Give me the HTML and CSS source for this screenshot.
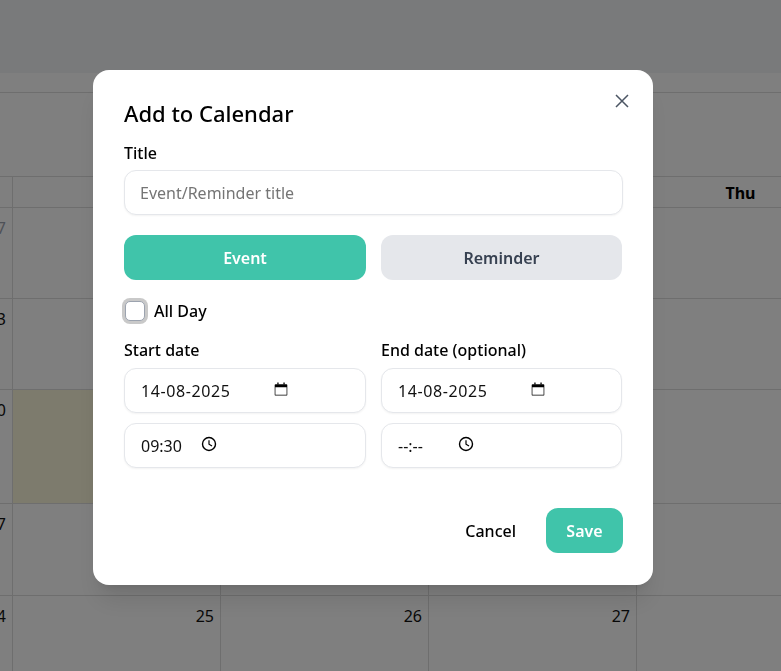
FILE: index.html
```html
<!DOCTYPE html>
<html lang="en">
<head>
  <meta charset="UTF-8">
  <title>Add to Calendar</title>
  <meta name="viewport" content="width=device-width, initial-scale=1.0">
  <link rel="stylesheet" href="styles.css">
</head>
<body>
  <div class="topbar"></div>
  <div class="toolbar"></div>
  <div class="spacer"></div>

  <div class="calendar">
    <div class="head">Sun</div><div class="head">Mon</div><div class="head">Tue</div><div class="head">Wed</div><div class="head">Thu</div><div class="head">Fri</div><div class="head">Sat</div>

    <div class="day muted">27</div><div class="day muted">28</div><div class="day muted">29</div><div class="day muted">30</div><div class="day muted">31</div><div class="day">1</div><div class="day">2</div>
    <div class="day">3</div><div class="day">4</div><div class="day">5</div><div class="day">6</div><div class="day">7</div><div class="day">8</div><div class="day">9</div>
    <div class="day">10</div><div class="day today">11</div><div class="day">12</div><div class="day">13</div><div class="day">14</div><div class="day">15</div><div class="day">16</div>
    <div class="day">17</div><div class="day">18</div><div class="day">19</div><div class="day">20</div><div class="day">21</div><div class="day">22</div><div class="day">23</div>
    <div class="day">24</div><div class="day">25</div><div class="day">26</div><div class="day">27</div><div class="day">28</div><div class="day">29</div><div class="day">30</div>
  </div>

  <div class="overlay">
    <div class="modal">
      <button class="close" aria-label="Close">
        <svg width="14" height="14" viewBox="0 0 14 14"><path d="M1 1l12 12M13 1L1 13" stroke="#4b5563" stroke-width="1.5" fill="none"/></svg>
      </button>

      <h2>Add to Calendar</h2>

      <label class="label" for="title">Title</label>
      <input id="title" class="text-input" type="text" placeholder="Event/Reminder title">

      <div class="two-col toggle">
        <button class="btn primary">Event</button>
        <button class="btn secondary">Reminder</button>
      </div>

      <div class="allday">
        <span class="check"></span>
        <span>All Day</span>
      </div>

      <div class="two-col">
        <div class="col">
          <div class="label">Start date</div>
          <div class="field">
            <span class="date-val">14-08-2025</span>
            <svg class="icon" width="16" height="16" viewBox="0 0 16 16"><path d="M2.6 3.2h10.8a.9.9 0 0 1 .9.9v9.6a.9.9 0 0 1-.9.9H2.6a.9.9 0 0 1-.9-.9V4.100a.9.9 0 0 1 .9-.9zM2.400 6.200h11.200V13.700H2.400z" fill="#000" fill-rule="evenodd"/><path d="M4.300 1.500h1.300v2H4.300zM10.400 1.500h1.300v2h-1.300z" fill="#000"/></svg>
          </div>
          <div class="field">
            <span class="time-val">09:30</span>
            <svg class="icon" width="16" height="16" viewBox="0 0 16 16"><circle cx="8" cy="8" r="6.500" fill="none" stroke="#000" stroke-width="1.400"/><path d="M8 4.200V8.200l3 1.900" fill="none" stroke="#000" stroke-width="1.200"/></svg>
          </div>
        </div>
        <div class="col">
          <div class="label">End date (optional)</div>
          <div class="field">
            <span class="date-val">14-08-2025</span>
            <svg class="icon" width="16" height="16" viewBox="0 0 16 16"><path d="M2.6 3.2h10.8a.9.9 0 0 1 .9.9v9.6a.9.9 0 0 1-.9.9H2.6a.9.9 0 0 1-.9-.9V4.100a.9.9 0 0 1 .9-.9zM2.400 6.200h11.200V13.700H2.400z" fill="#000" fill-rule="evenodd"/><path d="M4.300 1.500h1.300v2H4.300zM10.400 1.500h1.300v2h-1.300z" fill="#000"/></svg>
          </div>
          <div class="field">
            <span class="time-val">--:--</span>
            <svg class="icon" width="16" height="16" viewBox="0 0 16 16"><circle cx="8" cy="8" r="6.500" fill="none" stroke="#000" stroke-width="1.400"/><path d="M8 4.200V8.200l3 1.900" fill="none" stroke="#000" stroke-width="1.200"/></svg>
          </div>
        </div>
      </div>

      <div class="actions">
        <button class="btn link">Cancel</button>
        <button class="btn primary save">Save</button>
      </div>
    </div>
  </div>
</body>
</html>
```

FILE: styles.css
```css
html, body {
  margin: 0;
  height: 100%;
  overflow: hidden;
}
body {
  font-family: "Noto Sans", "Open Sans", sans-serif;
  font-size: 16px;
  color: #000;
  background: #fff;
}

/* page behind the modal */
.topbar {
  height: 73px;
  background: #f3f4f6;
}
.toolbar {
  height: 20px;
  border-bottom: 1px solid #ddd;
  box-sizing: border-box;
}
.spacer {
  height: 84px;
}
.calendar {
  display: grid;
  grid-template-columns: repeat(7, 208px);
  grid-template-rows: 31px 91px 91px 114px 92px 100px;
  margin-left: -195px;
  width: 1456px;
  border-top: 1px solid #ddd;
  margin-top: -1px;
}
.head {
  border-right: 1px solid #ddd;
  border-bottom: 1px solid #ddd;
  font-weight: 700;
  text-align: center;
  line-height: 33px;
}
.day {
  border-right: 1px solid #ddd;
  border-bottom: 1px solid #ddd;
  padding: 8px 6px 0 0;
  text-align: right;
  line-height: 24px;
  color: #111;
}
.day.muted {
  color: #9ca3af;
}
.day.today {
  background: #fbf7da;
}

/* modal */
.overlay {
  position: fixed;
  inset: 0;
  background: rgba(0, 0, 0, 0.5);
}
.modal {
  position: relative;
  box-sizing: border-box;
  width: 560px;
  height: 515px;
  margin: 70px 0 0 93px;
  padding: 26px 30px 30px 31px;
  background: #fff;
  border-radius: 16px;
  box-shadow: 0 20px 25px -5px rgba(0, 0, 0, 0.1), 0 8px 10px -6px rgba(0, 0, 0, 0.1);
}
.close {
  position: absolute;
  top: 24px;
  right: 24px;
  padding: 0;
  border: 0;
  background: none;
  line-height: 0;
}
h2 {
  margin: 0 0 12px;
  font-size: 22px;
  font-weight: 500;
  line-height: 34px;
}
.label {
  display: block;
  margin-bottom: 6px;
  font-weight: 500;
  line-height: 22px;
}
.text-input, .field {
  box-sizing: border-box;
  width: 100%;
  height: 45px;
  border: 1px solid #e5e7eb;
  border-radius: 12px;
  box-shadow: 0 1px 2px rgba(0, 0, 0, 0.05);
  background: #fff;
  font: inherit;
}
.text-input {
  display: block;
  padding: 0 15px;
  outline: none;
}
.text-input::placeholder {
  color: #757575;
}
.two-col {
  display: grid;
  grid-template-columns: 242px 241px;
  gap: 15px;
}
.toggle {
  margin-top: 20px;
}
.btn {
  height: 45px;
  border: 0;
  border-radius: 12px;
  font: inherit;
  font-weight: 600;
}
.primary {
  background: #40c4aa;
  color: #fff;
}
.secondary {
  background: #e5e7eb;
  color: #374151;
}
.allday {
  display: flex;
  align-items: center;
  gap: 9px;
  margin: 19px 0 0;
  height: 24px;
  font-weight: 500;
}
.check {
  box-sizing: border-box;
  width: 20px;
  height: 20px;
  border: 1px solid #9ca3af;
  border-radius: 5px;
  background: #fff;
  box-shadow: 0 0 0 3px #c9c9c9;
}
.allday .check {
  margin: 0 0 0 1px;
}
.allday + .two-col {
  margin-top: 16px;
}
.col {
  display: flex;
  flex-direction: column;
}
.col .label {
  margin-bottom: 7px;
}
.field {
  display: flex;
  align-items: center;
  padding: 0 16px;
  color: #111;
}
.field + .field {
  margin-top: 10px;
}
.date-val {
  width: 132px;
  letter-spacing: 0.6px;
}
.time-val {
  width: 60px;
}
.icon {
  flex: none;
  margin-top: -3px;
}
.actions {
  display: flex;
  justify-content: flex-end;
  align-items: center;
  margin-top: 40px;
  gap: 30px;
}
.link {
  background: none;
  color: #000;
  font-weight: 500;
  padding: 0;
}
.save {
  width: 77px;
}
```
